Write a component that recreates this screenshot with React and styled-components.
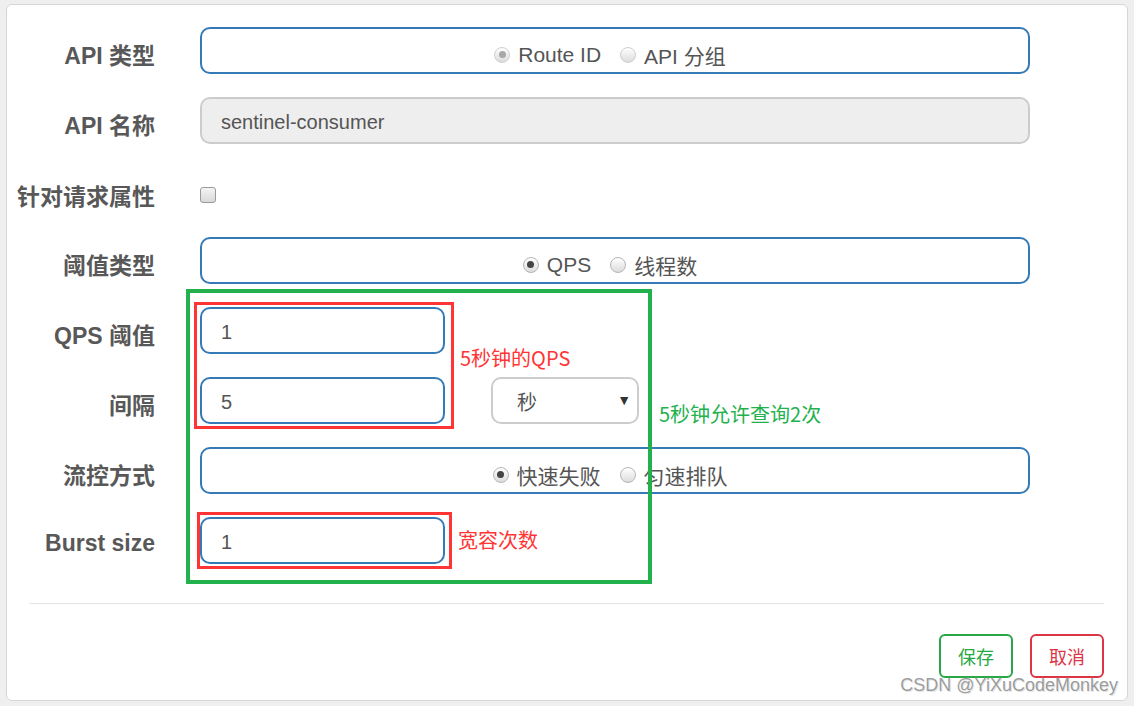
import React from "react";
import styled, { createGlobalStyle } from "styled-components";

const GlobalStyle = createGlobalStyle`
  html, body { margin: 0; padding: 0; background: #efefef; }
  body { font-family: "Liberation Sans", Arial, "Noto Sans CJK SC", sans-serif; }
  * { box-sizing: border-box; }
`;

const Card = styled.div`
  position: relative;
  margin: 4px 6px 0 6px;
  height: 697px;
  background: #fff;
  border: 1px solid #d6d6d6;
  border-radius: 6px;
  padding-top: 22px;
`;

const Form = styled.div`
  display: grid;
  grid-template-columns: 148px 1fr;
  column-gap: 45px;
  row-gap: 23px;
  padding-right: 97px;
`;

const Label = styled.div`
  display: flex;
  align-items: center;
  justify-content: flex-end;
  height: 47px;
  padding-top: ${(p) => p.$shift || 6}px;
  font-family: "Liberation Sans", Arial, "Noto Sans CJK SC", sans-serif;
  font-weight: bold;
  font-size: 23px;
  color: #585858;
  white-space: nowrap;
`;

const Field = styled.div`
  display: flex;
  align-items: center;
  gap: 46px;
  height: 47px;
`;

const Input = styled.div`
  display: flex;
  align-items: center;
  height: 47px;
  width: ${(p) => p.$width || "100%"};
  padding: 3px 19px 0;
  border: 2px solid ${(p) => (p.$disabled ? "#cccccc" : "#337ab7")};
  border-radius: 10px;
  background: ${(p) => (p.$disabled ? "#eeeeee" : "#fff")};
  font-size: 20px;
  color: #555;
`;

const RadioBox = styled.div`
  display: flex;
  align-items: center;
  justify-content: center;
  width: 100%;
  height: 47px;
  padding: 8px 10px 0 0;
  border: 2px solid #337ab7;
  border-radius: 10px;
  font-size: 21px;
  color: #555;
  gap: 19px;
`;

const RadioItem = styled.label`
  display: flex;
  align-items: center;
  gap: 8px;
  font-family: "Liberation Sans", Arial, "Noto Sans CJK SC", sans-serif;
`;

const RadioCircle = styled.span`
  display: inline-flex;
  align-items: center;
  justify-content: center;
  width: 16px;
  height: 16px;
  border-radius: 50%;
  border: 1px solid ${(p) => (p.$muted ? "#cfcfcf" : "#b5b5b5")};
  background: linear-gradient(#ffffff, #dcdcdc);
  &::after {
    content: "";
    display: ${(p) => (p.$checked ? "block" : "none")};
    width: 7px;
    height: 7px;
    border-radius: 50%;
    background: ${(p) => (p.$muted ? "#a8a8a8" : "#444")};
  }
`;

const CheckboxRow = styled.div`
  display: flex;
  align-items: center;
  height: 47px;
  padding-top: 8px;
`;

const Checkbox = styled.span`
  display: block;
  width: 16px;
  height: 16px;
  border: 1px solid #9a9a9a;
  border-radius: 3px;
  background: linear-gradient(#f4f4f4, #d9d9d9);
`;

const Select = styled.div`
  display: flex;
  align-items: center;
  justify-content: space-between;
  width: 148px;
  height: 47px;
  padding: 2px 6px 0 24px;
  border: 2px solid #cccccc;
  border-radius: 10px;
  font-size: 20px;
  color: #555;
`;

const Arrow = styled.span`
  font-size: 14px;
  color: #333;
  margin-top: -4px;
`;

const Divider = styled.div`
  margin: 39px 23px 0 22px;
  height: 1px;
  background: #e3e3e3;
`;

const Actions = styled.div`
  display: flex;
  justify-content: flex-end;
  gap: 17px;
  margin-top: 30px;
  padding-right: 23px;
`;

const Button = styled.button`
  width: 74px;
  height: 44px;
  background: #fff;
  border: 2px solid ${(p) => p.$color};
  border-radius: 6px;
  color: ${(p) => p.$color};
  font-family: "Noto Sans CJK SC", sans-serif;
  font-size: 18px;
  padding: 0;
`;

const Frame = styled.div`
  position: absolute;
  left: ${(p) => p.$x}px;
  top: ${(p) => p.$y}px;
  width: ${(p) => p.$w}px;
  height: ${(p) => p.$h}px;
  border: ${(p) => p.$stroke}px solid ${(p) => p.$color};
  pointer-events: none;
`;

const Note = styled.div`
  position: absolute;
  left: ${(p) => p.$x}px;
  top: ${(p) => p.$y}px;
  font-family: "Noto Sans CJK SC", sans-serif;
  font-size: 20px;
  line-height: 24px;
  color: ${(p) => p.$color};
  white-space: nowrap;
`;

const Watermark = styled.div`
  position: absolute;
  right: 9px;
  top: 670px;
  font-family: "Liberation Sans", Arial, sans-serif;
  font-size: 18px;
  color: #9c9c9c;
  text-shadow: 0 0 1px #fff, 1px 1px 0 #e4e4e4;
  white-space: nowrap;
`;

const Radio = ({ checked, muted, children }) => (
  <RadioItem>
    <RadioCircle $checked={checked} $muted={muted} />
    {children}
  </RadioItem>
);

export default function App() {
  return (
    <>
      <GlobalStyle />
      <Card>
        <Form>
          <Label>API 类型</Label>
          <RadioBox>
            <Radio checked muted>Route ID</Radio>
            <Radio muted>API 分组</Radio>
          </RadioBox>

          <Label>API 名称</Label>
          <Input $disabled>sentinel-consumer</Input>

          <Label $shift={9}>针对请求属性</Label>
          <CheckboxRow>
            <Checkbox />
          </CheckboxRow>

          <Label>阈值类型</Label>
          <RadioBox>
            <Radio checked>QPS</Radio>
            <Radio>线程数</Radio>
          </RadioBox>

          <Label>QPS 阈值</Label>
          <Field>
            <Input $width="245px">1</Input>
          </Field>

          <Label>间隔</Label>
          <Field>
            <Input $width="245px">5</Input>
            <Select>
              <span>秒</span>
              <Arrow>▼</Arrow>
            </Select>
          </Field>

          <Label>流控方式</Label>
          <RadioBox>
            <Radio checked>快速失败</Radio>
            <Radio>匀速排队</Radio>
          </RadioBox>

          <Label>Burst size</Label>
          <Field>
            <Input $width="245px">1</Input>
          </Field>
        </Form>

        <Divider />
        <Actions>
          <Button $color="#28a745">保存</Button>
          <Button $color="#dc3545">取消</Button>
        </Actions>

        <Frame $x={179} $y={284} $w={466} $h={295} $stroke={4} $color="#22b14c" />
        <Frame $x={187} $y={297} $w={260} $h={127} $stroke={3} $color="#ff3535" />
        <Frame $x={190} $y={507} $w={255} $h={57} $stroke={3} $color="#ff3535" />
        <Note $x={453} $y={341} $color="#ff3535">5秒钟的QPS</Note>
        <Note $x={652} $y={397} $color="#22b14c">5秒钟允许查询2次</Note>
        <Note $x={451} $y={523} $color="#ff3535">宽容次数</Note>
        <Watermark>CSDN @YiXuCodeMonkey</Watermark>
      </Card>
    </>
  );
}
